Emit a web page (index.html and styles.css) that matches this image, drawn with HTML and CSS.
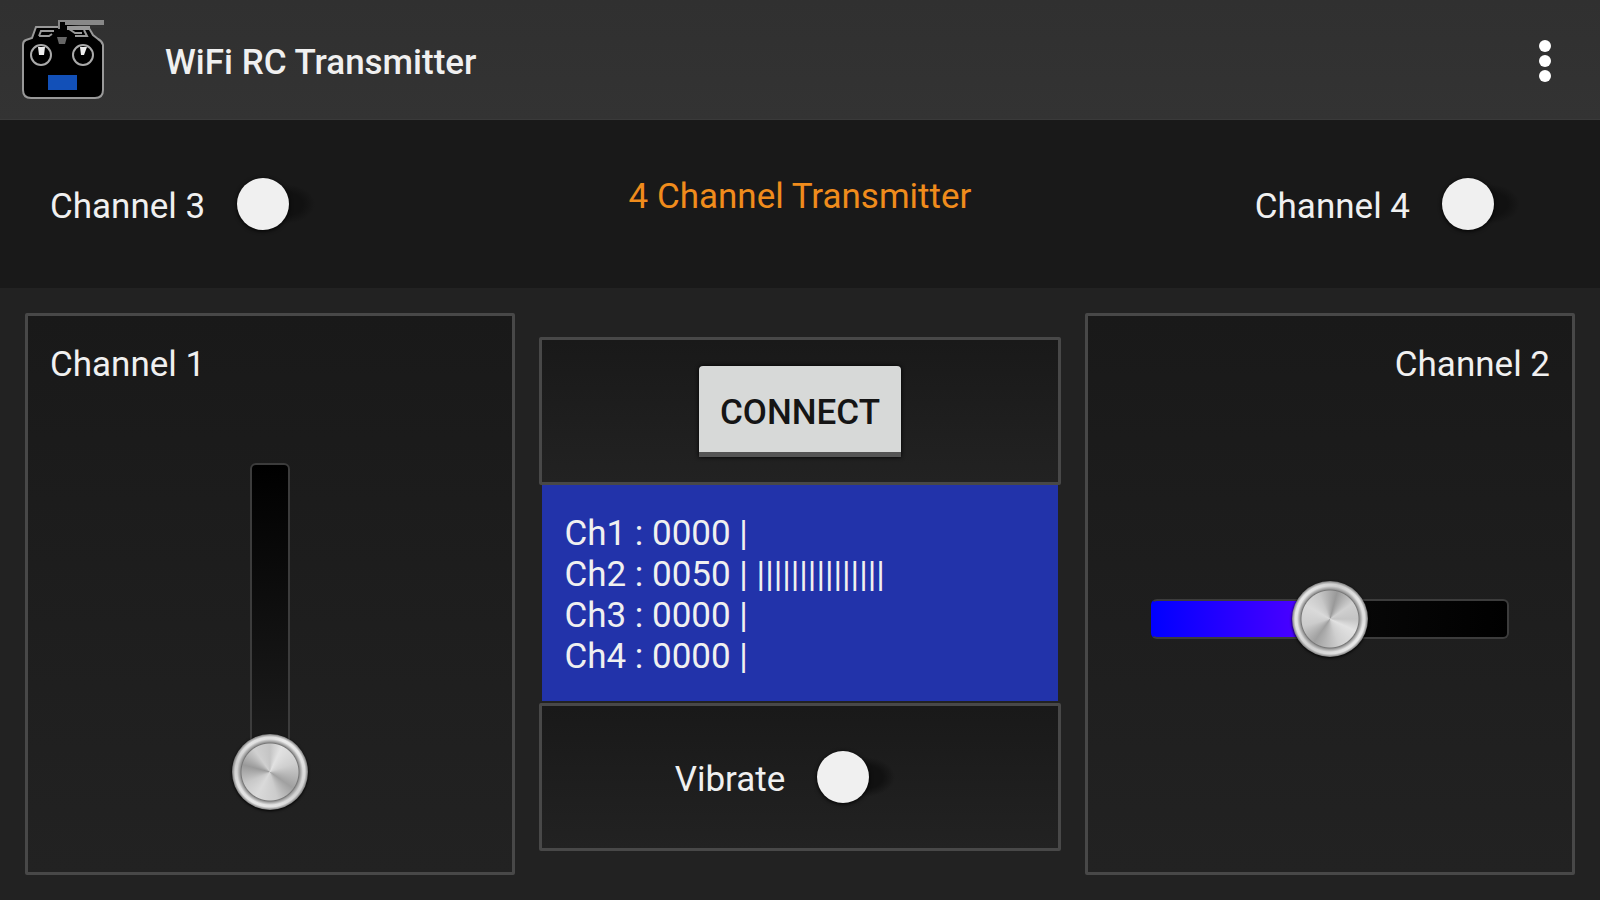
FILE: index.html
```
<!DOCTYPE html>
<html lang="en">
<head>
    <meta charset="UTF-8">
    <meta name="viewport" content="width=device-width, initial-scale=1.0">
    <title>WiFi RC Transmitter</title>
    <link rel="stylesheet" href="styles.css">
</head>
<body>
    <header class="app-bar">
        <svg class="app-icon" viewBox="0 0 84 84" aria-hidden="true">
            <path d="M2 22 L11 19 L15 7 H37 V1 H82 V6 H48 L69 8 L73 17 L82 25 V71 Q82 79 74 79 H10 Q2 79 2 71 Z" fill="#000"/>
            <path d="M48 8 H83" stroke="#333" stroke-width="2"/>
            <path d="M37 8 H15 L11 19 L5 21 Q2 22 2 26 V71 Q2 79 10 79 H74 Q82 79 82 71 V26 Q81 22 77 20 L72 16 L68 9" fill="none" stroke="#999" stroke-width="2"/>
            <path d="M38 10 V2 H83" stroke="#888" stroke-width="2" fill="none"/>
            <path d="M44 4 H83" stroke="#888" stroke-width="4" fill="none"/>
            <path d="M18 17 L20 12 H33 M18 17 H28 L31 15" fill="none" stroke="#999" stroke-width="2"/>
            <path d="M46 9 H69" stroke="#999" stroke-width="4"/>
            <path d="M48 10 L54 14 H61 M54 17 H66 L63 11" fill="none" stroke="#999" stroke-width="2"/>
            <path d="M36 18 H46 L44 25 H38 Z" fill="#666"/>
            <circle cx="20" cy="36" r="10" fill="#000" stroke="#aaa" stroke-width="2"/>
            <circle cx="62" cy="36" r="10" fill="#000" stroke="#aaa" stroke-width="2"/>
            <path d="M17 28 H24 L23 36 H18 Z M59 28 H66 L63 36 H60 Z" fill="#eee"/>
            <rect x="27" y="56" width="29" height="15" fill="#1250b8"/>
        </svg>
        <h1 class="app-title">WiFi RC Transmitter</h1>
        <button class="menu-button" type="button" aria-label="More options">
            <svg viewBox="0 0 12 44" aria-hidden="true">
                <circle cx="6" cy="7" r="6" fill="#fff"/>
                <circle cx="6" cy="22" r="6" fill="#fff"/>
                <circle cx="6" cy="37" r="6" fill="#fff"/>
            </svg>
        </button>
    </header>

    <section class="switch-bar">
        <label class="switch-row" for="channel3">Channel 3
            <input class="switch" type="checkbox" id="channel3">
        </label>
        <h2 class="mode">4 Channel Transmitter</h2>
        <label class="switch-row switch-row-end" for="channel4">Channel 4
            <input class="switch" type="checkbox" id="channel4">
        </label>
    </section>

    <main class="controls">
        <section class="panel channel">
            <label for="channel1">Channel 1</label>
            <div class="slider-area">
                <div class="track track-vertical" style="--value: 0%">
                    <input type="range" id="channel1" min="0" max="100" value="0">
                </div>
            </div>
        </section>

        <div class="center">
            <section class="panel box">
                <button class="connect" type="button">CONNECT</button>
            </section>
            <div class="display">
                <div>Ch1 : 0000 |</div>
                <div>Ch2 : 0050 | |||||||||||||||</div>
                <div>Ch3 : 0000 |</div>
                <div>Ch4 : 0000 |</div>
            </div>
            <section class="panel box">
                <label class="switch-row" for="vibrate">Vibrate
                    <input class="switch" type="checkbox" id="vibrate">
                </label>
            </section>
        </div>

        <section class="panel channel channel-right">
            <label for="channel2">Channel 2</label>
            <div class="slider-area">
                <div class="track track-horizontal" style="--value: 50%">
                    <input type="range" id="channel2" min="0" max="100" value="50">
                </div>
            </div>
        </section>
    </main>

    <script src="script.js"></script>
</body>
</html>
```
FILE: styles.css
```
* {
    box-sizing: border-box;
}

body {
    margin: 0;
    min-height: 100vh;
    display: flex;
    flex-direction: column;
    background: #222;
    color: #f0f0f0;
    font-family: Roboto, "Liberation Sans", sans-serif;
    font-size: 35px;
    line-height: 41px;
}

/* Top bar */
.app-bar {
    display: flex;
    align-items: center;
    height: 120px;
    padding: 2px 24px 0 21px;
    background: linear-gradient(#303030, #333);
    border-bottom: 1px solid #3a3a3a;
}

.app-icon {
    width: 84px;
    height: 84px;
}

.app-title {
    flex: 1;
    margin: 0 0 0 60px;
    padding-top: 4px;
    font-size: 35px;
    font-weight: 500;
}

.menu-button {
    width: 62px;
    height: 80px;
    padding: 0;
    border: none;
    background: none;
}

.menu-button svg {
    display: block;
    height: 44px;
    margin: 0 auto;
}

/* Channel 3 / 4 switches */
.switch-bar {
    display: grid;
    grid-template-columns: 1fr auto 1fr;
    align-items: center;
    height: 168px;
    padding: 0 50px;
    background: #191919;
}

.mode {
    margin: 0;
    padding-bottom: 16px;
    color: #f08c1c;
    font-size: 35px;
    font-weight: 400;
}

.switch-row {
    display: flex;
    align-items: center;
    gap: 32px;
    padding-top: 4px;
}

.switch-row-end {
    justify-content: flex-end;
}

.switch {
    appearance: none;
    width: 108px;
    height: 52px;
    margin: 0 0 4px;
    background: radial-gradient(closest-side, #111 60%, transparent) 16px 6px / 62px 40px no-repeat;
}

.switch::before {
    content: "";
    display: block;
    width: 52px;
    height: 52px;
    border-radius: 50%;
    background: #f0f0f0;
    box-shadow: 0 1px 4px #000;
}

.switch:checked::before {
    margin-left: 32px;
    background: #2233aa;
}

/* Main area */
.controls {
    flex: 1;
    display: grid;
    grid-template-columns: 16fr 17fr 16fr;
    gap: 24px;
    padding: 25px;
}

.panel {
    border: 3px solid #484848;
    border-radius: 2px;
    background: linear-gradient(#191919, #222);
}

.channel {
    display: flex;
    flex-direction: column;
    padding: 28px 22px 20px;
}

.channel-right {
    text-align: right;
}

.slider-area {
    flex: 1;
    display: flex;
    align-items: center;
    justify-content: center;
}

.center {
    display: flex;
    flex-direction: column;
    padding: 24px 0;
}

.box {
    flex: 1;
    display: flex;
    align-items: center;
    justify-content: center;
}

.connect {
    width: 202px;
    height: 91px;
    padding: 8px 0 0;
    border: none;
    border-bottom: 5px solid #555;
    border-radius: 4px 4px 0 0;
    background: #d7d9d8;
    box-shadow: 0 0 4px #000;
    color: #151515;
    font-family: inherit;
    font-size: 35px;
    font-weight: 500;
}

.display {
    margin: 0 3px 2px;
    padding: 28px 22px 24px;
    background: #2233aa;
}

/* Sliders: the thumb centre runs the full length of the track */
.track {
    display: flex;
    align-items: center;
    justify-content: center;
    border: 2px solid #3c3c3c;
    border-radius: 6px;
}

.track-horizontal {
    flex: 1;
    height: 40px;
    margin: 0 41px;
    background:
        linear-gradient(90deg, #0000ff, #5a00ff) border-box 0 / var(--value) 100% no-repeat,
        linear-gradient(90deg, #111, #000) border-box;
    border-color: #3c3c3c #3c3c3c #3c3c3c #0000ff;
}

.track-vertical {
    align-self: stretch;
    width: 40px;
    margin: 78px 0;
    background:
        linear-gradient(0deg, #0000ff, #5a00ff) bottom / 100% var(--value) no-repeat,
        linear-gradient(#000, #1f1f1f);
}

input[type="range"] {
    appearance: none;
    flex: none;
    margin: 0;
    background: none;
}

.track-horizontal input {
    width: calc(100% + 76px);
    height: 76px;
}

.track-vertical input {
    writing-mode: vertical-lr;
    direction: rtl;
    align-self: stretch;
    width: 76px;
    margin: -38px 0;
}

input[type="range"]::-webkit-slider-thumb {
    appearance: none;
    width: 76px;
    height: 76px;
    border-radius: 50%;
    background:
        radial-gradient(circle, transparent 28px, #777 29px, #999 30px, rgba(240, 240, 240, 0.6) 33px, rgba(240, 240, 240, 0.6) 35px, #777 38px),
        conic-gradient(from 15deg, #999, #d0d0d0 40deg, #c4c4c4 75deg, #e2e2e2 100deg, #cfcfcf 145deg, #a0a0a0 200deg, #bbb 225deg, #ccc 240deg, #dadada 285deg, #c8c8c8 320deg, #999);
    box-shadow: 0 1px 3px #000;
}

.track-vertical input::-webkit-slider-thumb {
    background:
        radial-gradient(circle, transparent 28px, #777 29px, #999 30px, rgba(240, 240, 240, 0.6) 33px, rgba(240, 240, 240, 0.6) 35px, #777 38px),
        conic-gradient(from 285deg, #999, #d0d0d0 40deg, #c4c4c4 75deg, #e2e2e2 100deg, #cfcfcf 145deg, #a0a0a0 200deg, #bbb 225deg, #ccc 240deg, #dadada 285deg, #c8c8c8 320deg, #999);
}
```
FILE: script.js
```
// Keep the coloured part of each track in step with its slider
document.querySelectorAll('input[type="range"]').forEach(slider => {
    slider.addEventListener('input', () => {
        slider.parentElement.style.setProperty('--value', slider.value + '%');
    });
});
```
